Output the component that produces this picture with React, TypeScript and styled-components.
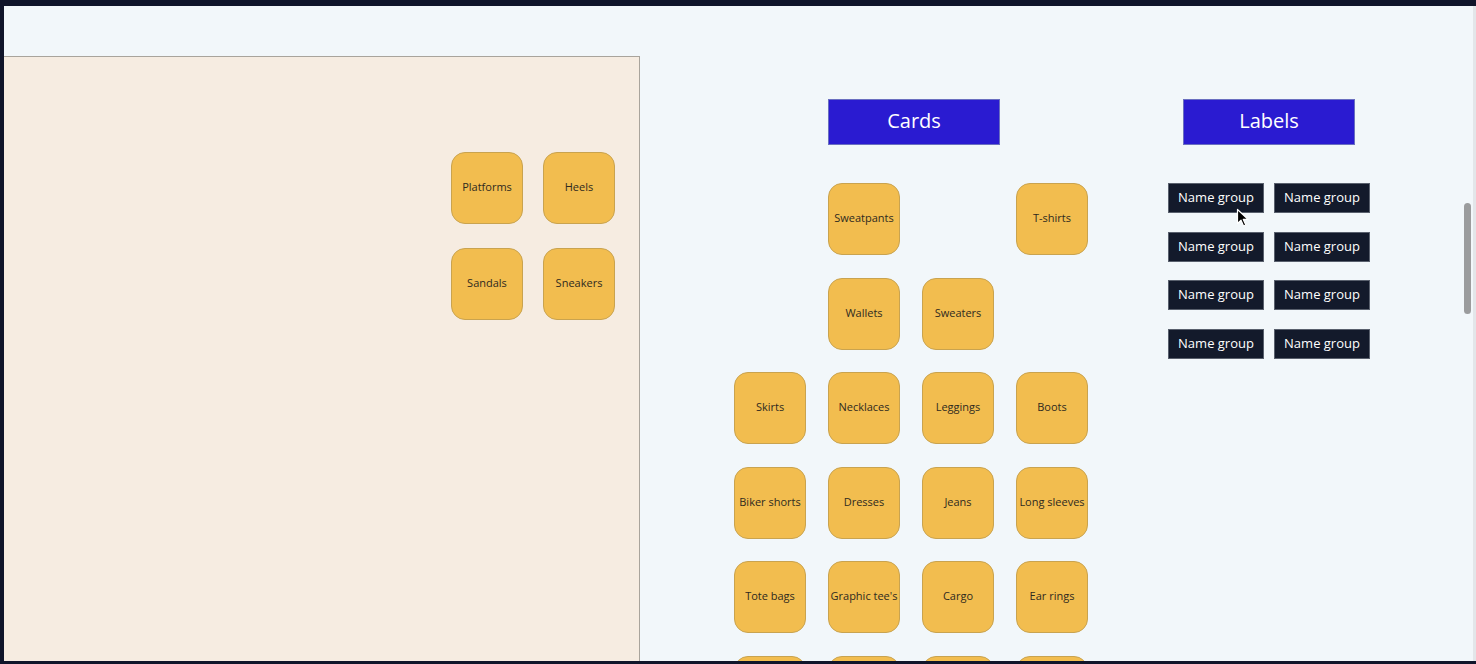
import React from "react";
import styled, { createGlobalStyle } from "styled-components";

const Global = createGlobalStyle`
  html, body { margin: 0; padding: 0; height: 100%; overflow: hidden; }
  body { font-family: "Open Sans", "Noto Sans", sans-serif; }
  #root { height: 664px; }
`;

const Frame = styled.div`
  height: 664px;
  box-sizing: border-box;
  background: #10152a;
  padding: 6px 0 3px 4px;
  display: flex;
`;

const Canvas = styled.div`
  flex: 1;
  display: flex;
  background: #f2f7fa;
  position: relative;
  overflow: hidden;
`;

const Content = styled.div`
  flex: 1;
  display: flex;
  align-items: flex-start;
`;

const EdgeStrip = styled.div`
  width: 3px;
  background: #e3e6e9;
`;

const Scrollbar = styled.div`
  position: absolute;
  right: 5px;
  top: 197px;
  width: 7px;
  height: 111px;
  border-radius: 4px;
  background: #9b9c9d;
`;

const Panel = styled.div`
  margin-top: 50px;
  width: 636px;
  height: 605px;
  box-sizing: border-box;
  background: #f6ece1;
  border-top: 1px solid #a9a49c;
  border-right: 1px solid #a9a49c;
  display: flex;
  justify-content: flex-end;
  align-items: flex-start;
  padding: 95px 24px 0 0;
`;

const PanelGrid = styled.div`
  display: grid;
  grid-template-columns: repeat(2, 72px);
  column-gap: 20px;
  row-gap: 24px;
`;

const Card = styled.div<{ $col?: number }>`
  width: 72px;
  height: 72px;
  box-sizing: border-box;
  border-radius: 14px;
  background: #f2bd4f;
  border: 1px solid #c9a34f;
  display: flex;
  align-items: center;
  justify-content: center;
  text-align: center;
  font-size: 11px;
  color: #2f2a20;
  white-space: nowrap;
  padding-bottom: 3px;
  ${(p) => (p.$col ? `grid-column: ${p.$col};` : "")}
`;

const Right = styled.div`
  display: flex;
  align-items: flex-start;
  padding: 93px 0 0 94px;
  gap: 80px;
`;

const Section = styled.div`
  display: flex;
  flex-direction: column;
  gap: 38px;
`;

const Header = styled.div<{ $offset: number }>`
  margin-left: ${(p) => p.$offset}px;
  width: 172px;
  height: 46px;
  box-sizing: border-box;
  background: #2a1bd1;
  border: 1px solid #6a6fc0;
  color: #ffffff;
  font-size: 20px;
  display: flex;
  align-items: center;
  justify-content: center;
  padding-bottom: 4px;
`;

const CardGrid = styled.div`
  display: grid;
  grid-template-columns: repeat(4, 72px);
  column-gap: 22px;
  row-gap: 22.5px;
`;

const LabelGrid = styled.div`
  display: grid;
  grid-template-columns: repeat(2, 96px);
  column-gap: 10px;
  row-gap: 18.7px;
`;

const Label = styled.div`
  height: 30px;
  box-sizing: border-box;
  background: #131a2b;
  border: 1px solid #59606d;
  color: #ffffff;
  font-size: 13px;
  display: flex;
  align-items: center;
  justify-content: center;
  white-space: nowrap;
  padding-bottom: 2px;
`;

const Cursor = styled.svg`
  position: absolute;
  left: 1232px;
  top: 202px;
  pointer-events: none;
`;

const panelCards = ["Platforms", "Heels", "Sandals", "Sneakers"];

const cardRows: (string | null)[][] = [
  [null, "Sweatpants", null, "T-shirts"],
  [null, "Wallets", "Sweaters", null],
  ["Skirts", "Necklaces", "Leggings", "Boots"],
  ["Biker shorts", "Dresses", "Jeans", "Long sleeves"],
  ["Tote bags", "Graphic tee's", "Cargo", "Ear rings"],
  ["", "", "", ""],
];

export default function App() {
  return (
    <>
      <Global />
      <Frame>
        <Canvas>
          <Content>
            <Panel>
              <PanelGrid>
                {panelCards.map((c) => (
                  <Card key={c}>{c}</Card>
                ))}
              </PanelGrid>
            </Panel>
            <Right>
              <Section>
                <Header $offset={94}>Cards</Header>
                <CardGrid>
                  {cardRows.flatMap((row, r) =>
                    row.map((c, i) =>
                      c === null ? null : (
                        <Card key={`${r}-${i}`} $col={i + 1}>
                          {c}
                        </Card>
                      )
                    )
                  )}
                </CardGrid>
              </Section>
              <Section>
                <Header $offset={15}>Labels</Header>
                <LabelGrid>
                  {Array.from({ length: 8 }).map((_, i) => (
                    <Label key={i}>Name group</Label>
                  ))}
                </LabelGrid>
              </Section>
            </Right>
          </Content>
          <EdgeStrip />
          <Scrollbar />
          <Cursor width="14" height="20" viewBox="0 0 14 20">
            <path
              d="M1.5 1.5 L1.5 15.5 L5 12.2 L7.6 18 L9.8 17 L7.3 11.4 L12 11.4 Z"
              fill="#000"
              stroke="#fff"
              strokeWidth="1.2"
              strokeLinejoin="round"
            />
          </Cursor>
        </Canvas>
      </Frame>
    </>
  );
}
